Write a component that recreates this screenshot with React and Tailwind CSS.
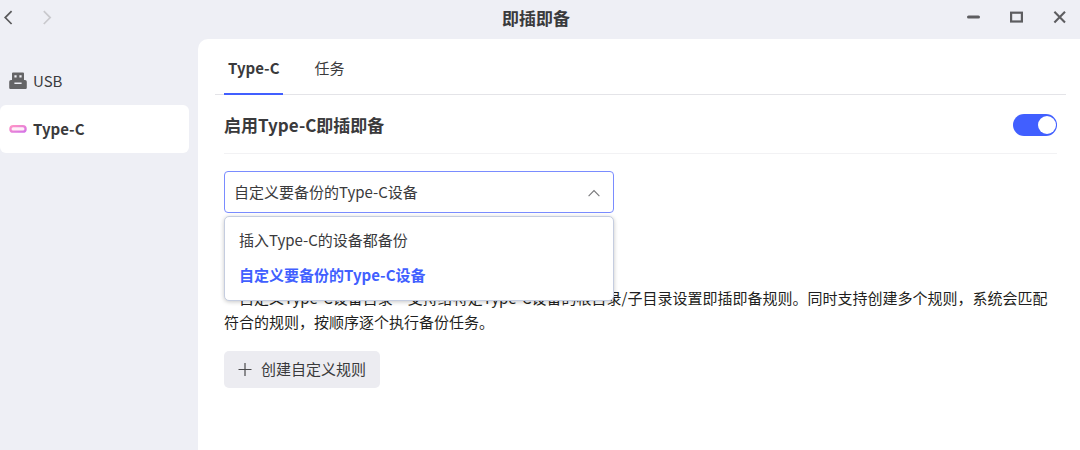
import React, { useState } from 'react';

const NAV_ITEMS = [
  { id: 'usb', label: 'USB', Icon: UsbIcon },
  { id: 'typec', label: 'Type-C', Icon: TypeCIcon },
];

const TABS = [
  { id: 'typec', label: 'Type-C' },
  { id: 'tasks', label: '任务' },
];

const MODES = [
  { id: 'all', label: '插入Type-C的设备都备份' },
  { id: 'custom', label: '自定义要备份的Type-C设备' },
];

function UsbIcon() {
  return (
    <svg viewBox="0 0 18 18" className="h-[18px] w-[18px]" aria-hidden="true">
      <path
        fill="#646466"
        fillRule="evenodd"
        d="M4 .6h10a1 1 0 0 1 1 1V8h1a1.8 1.8 0 0 1 1.8 1.8v6a1.2 1.2 0 0 1-1.2 1.2H1.4a1.2 1.2 0 0 1-1.2-1.2v-6A1.8 1.8 0 0 1 2 8h1V1.6a1 1 0 0 1 1-1ZM5.4 3.200v2.4h2.2V3.200ZM10.4 3.200v2.4h2.2V3.200ZM5.4 10.600v1.500h7.200v-1.500Z"
      />
    </svg>
  );
}

function TypeCIcon() {
  return (
    <svg viewBox="0 0 18 18" className="h-[18px] w-[18px]" aria-hidden="true">
      <defs>
        <linearGradient id="typec-stroke" x1="0" y1="0" x2="1" y2="1">
          <stop offset="0" stopColor="#ff94c6" />
          <stop offset="1" stopColor="#d473e6" />
        </linearGradient>
      </defs>
      <rect x="1.4" y="6.1" width="15.2" height="5.6" rx="2.8" fill="#fff0f8" stroke="url(#typec-stroke)" strokeWidth="2.3" />
    </svg>
  );
}

function TitleBar() {
  return (
    <header className="grid h-[39px] grid-cols-[1fr_auto_1fr] items-center pr-2 pb-1">
      <div className="flex items-center gap-[22px]">
        <button type="button" aria-label="后退" className="flex h-4 w-4 items-center justify-center">
          <svg viewBox="0 0 16 16" className="h-4 w-4" fill="none" stroke="#59595b" strokeWidth="1.7">
            <path d="M11.6 1.200 5.200 7.600l6.400 6.400" />
          </svg>
        </button>
        <button type="button" aria-label="前进" disabled className="flex h-4 w-4 items-center justify-center">
          <svg viewBox="0 0 16 16" className="h-4 w-4" fill="none" stroke="#c9c9cd" strokeWidth="1.7">
            <path d="M5.800 1.200 12.200 7.600l-6.400 6.400" />
          </svg>
        </button>
      </div>
      <h1 className="text-[17px] leading-6 font-bold">即插即备</h1>
      <div className="flex items-center justify-end gap-[27px] pr-1">
        <button type="button" aria-label="最小化">
          <svg viewBox="0 0 16 16" className="h-4 w-4" fill="none" stroke="#5d5d60" strokeWidth="3" strokeLinecap="round">
            <path d="M2.500 7h10" />
          </svg>
        </button>
        <button type="button" aria-label="最大化">
          <svg viewBox="0 0 16 16" className="h-4 w-4" fill="none" stroke="#5d5d60" strokeWidth="2.2">
            <rect x="2.100" y="2.700" width="10.800" height="8.800" />
          </svg>
        </button>
        <button type="button" aria-label="关闭">
          <svg viewBox="0 0 16 16" className="h-4 w-4" fill="none" stroke="#5d5d60" strokeWidth="2.1">
            <path d="m2.400 1.800 10.600 10.600M13 1.800 2.400 12.400" />
          </svg>
        </button>
      </div>
    </header>
  );
}

function Sidebar({ active, onSelect }) {
  return (
    <nav className="w-[198px] shrink-0 pt-[18px] pr-[9px]">
      {NAV_ITEMS.map(({ id, label, Icon }) => (
        <button
          key={id}
          type="button"
          onClick={() => onSelect(id)}
          className={`flex h-12 w-full items-center gap-1.5 rounded-md pl-[9px] text-[15px] ${
            active === id ? 'bg-white font-bold' : ''
          }`}
        >
          <Icon />
          <span>{label}</span>
        </button>
      ))}
    </nav>
  );
}

function ModeSelect({ value, onChange }) {
  const [open, setOpen] = useState(true);

  const pick = (id) => {
    onChange(id);
    setOpen(false);
  };

  return (
    <div className="relative mt-[17px] w-[390px] max-w-full">
      <select
        aria-label="备份方式"
        value={value}
        onChange={(e) => pick(e.target.value)}
        onMouseDown={(e) => {
          e.preventDefault();
          setOpen(!open);
        }}
        className="block h-[42px] w-full appearance-none rounded border border-[#7a8cff] bg-white px-[9px] text-[15px] outline-none"
      >
        {MODES.map((mode) => (
          <option key={mode.id} value={mode.id}>{mode.label}</option>
        ))}
      </select>
      <svg
        viewBox="0 0 12 12"
        className="pointer-events-none absolute top-4 right-3.5 h-3 w-3"
        fill="none"
        stroke="#77777a"
        strokeWidth="1.1"
      >
        <path d="M.6 9.2 6 3.6l5.4 5.6" />
      </svg>

      {open && (
        <ul className="absolute inset-x-0 top-full z-10 mt-[3px] rounded-[5px] border border-[#c5cde0] bg-white pt-1.5 pb-[7px] shadow-[0_1px_4px_rgba(0,0,0,0.22)]">
          {MODES.map((mode) => (
            <li key={mode.id}>
              <button
                type="button"
                onClick={() => pick(mode.id)}
                className={`block h-[35px] w-full px-3.5 text-left text-[15px] ${
                  value === mode.id ? 'font-bold text-[#415fff]' : ''
                }`}
              >
                {mode.label}
              </button>
            </li>
          ))}
        </ul>
      )}
    </div>
  );
}

export default function App() {
  const [device, setDevice] = useState('typec');
  const [tab, setTab] = useState('typec');
  const [enabled, setEnabled] = useState(true);
  const [mode, setMode] = useState('custom');

  return (
    <div className="flex min-h-screen flex-col bg-[#eeeff5] font-['Noto_Sans_CJK_SC',sans-serif] text-[#3a3a3c]">
      <TitleBar />
      <div className="flex flex-1">
        <Sidebar active={device} onSelect={setDevice} />

        <main className="min-w-0 flex-1 rounded-tl-[10px] bg-white pr-3.5 pl-[17px]">
          {/* Tabs */}
          <div className="flex gap-[27px] border-b border-[#e4e4e8] pl-[9px]">
            {TABS.map((item) => (
              <button
                key={item.id}
                type="button"
                onClick={() => setTab(item.id)}
                className={`-mb-px h-14 border-b-2 px-1 pt-1 text-[15px] ${
                  tab === item.id ? 'border-[#415fff] font-bold' : 'border-transparent'
                }`}
              >
                {item.label}
              </button>
            ))}
          </div>

          <div className="px-[9px]">
            {/* Enable switch */}
            <div className="flex h-[59px] items-center justify-between border-b border-[#f2f2f4] pt-0.5">
              <label htmlFor="enable-typec" className="text-[17px] font-bold">启用Type-C即插即备</label>
              <input
                id="enable-typec"
                type="checkbox"
                role="switch"
                checked={enabled}
                onChange={(e) => setEnabled(e.target.checked)}
                className="h-[22px] w-11 appearance-none rounded-full bg-gray-300 p-0.5 before:block before:h-[18px] before:w-[18px] before:rounded-full before:bg-white checked:bg-[#415fff] checked:before:ml-[23px]"
              />
            </div>

            <ModeSelect value={mode} onChange={setMode} />

            <p className="mt-[73px] text-[15px] leading-6 text-[#1f1f21]">
              “自定义Type-C设备目录”支持给特定Type-C设备的根目录/子目录设置即插即备规则。同时支持创建多个规则，系统会匹配符合的规则，按顺序逐个执行备份任务。
            </p>

            <button
              type="button"
              className="mt-[17px] flex h-[37px] items-center gap-[9px] rounded-[5px] bg-[#ececf1] px-3.5 text-[15px]"
            >
              <svg viewBox="0 0 14 14" className="h-3.5 w-3.5" fill="none" stroke="#4a4a4c" strokeWidth="1.2">
                <path d="M7 0v13M.5 6.500h13" />
              </svg>
              创建自定义规则
            </button>
          </div>
        </main>
      </div>
    </div>
  );
}
